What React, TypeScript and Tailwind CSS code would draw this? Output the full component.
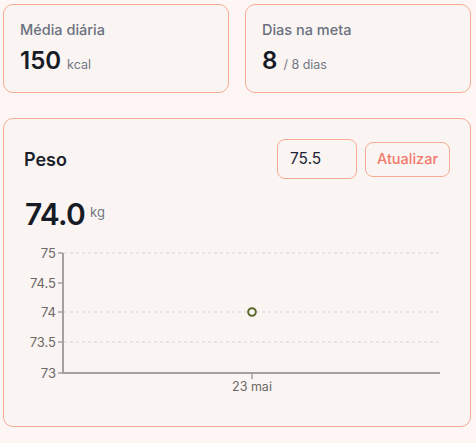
import React from "react";

const font = { fontFamily: "Inter, 'Noto Sans', sans-serif" };

function Chart() {
  const ys = [
    { v: "75", y: 12, grid: true },
    { v: "74.5", y: 42, grid: false },
    { v: "74", y: 71, grid: true },
    { v: "73.5", y: 101, grid: true },
    { v: "73", y: 132, grid: false },
  ];
  return (
    <svg width="426" height="170" className="block" style={{ fontFamily: "Inter, sans-serif" }}>
      {ys.map((t) =>
        t.grid ? (
          <line key={"g" + t.v} x1="40" x2="416" y1={t.y} y2={t.y} stroke="#e2dfdc" strokeWidth="1.5" strokeDasharray="3 3" />
        ) : null
      )}
      {ys.map((t) => (
        <g key={t.v}>
          <line x1="34" x2="39" y1={t.y} y2={t.y} stroke="#a3a09e" strokeWidth="1.5" />
          <text x="32" y={t.y + 4.5} textAnchor="end" fontSize="13" fill="#6b6866">
            {t.v}
          </text>
        </g>
      ))}
      <line x1="39" x2="39" y1="12" y2="133" stroke="#a3a09e" strokeWidth="2" />
      <line x1="38" x2="416" y1="132" y2="132" stroke="#a3a09e" strokeWidth="2" />
      <line x1="228" x2="228" y1="132" y2="138" stroke="#a3a09e" strokeWidth="1.5" />
      <text x="228" y="150" textAnchor="middle" fontSize="12.5" fill="#6b6866">
        23 mai
      </text>
      <circle cx="228" cy="71" r="3.8" fill="#fbf6f3" stroke="#5b6a2c" strokeWidth="2" />
    </svg>
  );
}

export default function App() {
  return (
    <div className="min-h-[443px] bg-[#fdf6f4] pl-[3px] pr-[5px] pt-[4px]" style={font}>
      <div className="grid grid-cols-2 gap-4">
        <div className="h-[89px] rounded-[10px] border border-[#f8ab93] bg-[#faf5f2] px-4 pt-[15px]">
          <div className="text-[14.5px] font-medium leading-5 text-[#6b7080]">Média diária</div>
          <div className="mt-[5px] flex items-baseline gap-[6px]">
            <span className="text-[24px] font-semibold leading-8 text-[#161b26]">150</span>
            <span className="text-[12.5px] text-[#727685]">kcal</span>
          </div>
        </div>
        <div className="h-[89px] rounded-[10px] border border-[#f8ab93] bg-[#faf5f2] px-4 pt-[15px]">
          <div className="text-[14.5px] font-medium leading-5 text-[#6b7080]">Dias na meta</div>
          <div className="mt-[5px] flex items-baseline gap-[6px]">
            <span className="text-[24px] font-semibold leading-8 text-[#161b26]">8</span>
            <span className="text-[12.5px] text-[#727685]">/ 8 dias</span>
          </div>
        </div>
      </div>
      <div className="mt-[25px] h-[309px] rounded-[10px] border border-[#f8ab93] bg-[#faf5f2] px-5 pt-5">
        <div className="flex h-10 items-center justify-between">
          <span className="text-[18px] font-semibold text-[#1a1f2b]">Peso</span>
          <div className="flex items-center gap-2">
            <div className="flex h-10 w-20 items-center rounded-lg border border-[#f8ab93] px-3 text-[15.5px] text-[#1f2433]">
              75.5
            </div>
            <button className="h-[35px] w-[85px] rounded-lg border border-[#f8ab93] text-[14.5px] font-medium text-[#f27a6c]">
              Atualizar
            </button>
          </div>
        </div>
        <div className="mt-[15px] flex items-start gap-[5px] pl-px">
          <span className="text-[30px] font-semibold leading-10 tracking-tight text-[#161b26]">74.0</span>
          <span className="mt-[9px] text-[13px] text-[#727685]">kg</span>
        </div>
        <div className="mt-[7px]">
          <Chart />
        </div>
      </div>
    </div>
  );
}
